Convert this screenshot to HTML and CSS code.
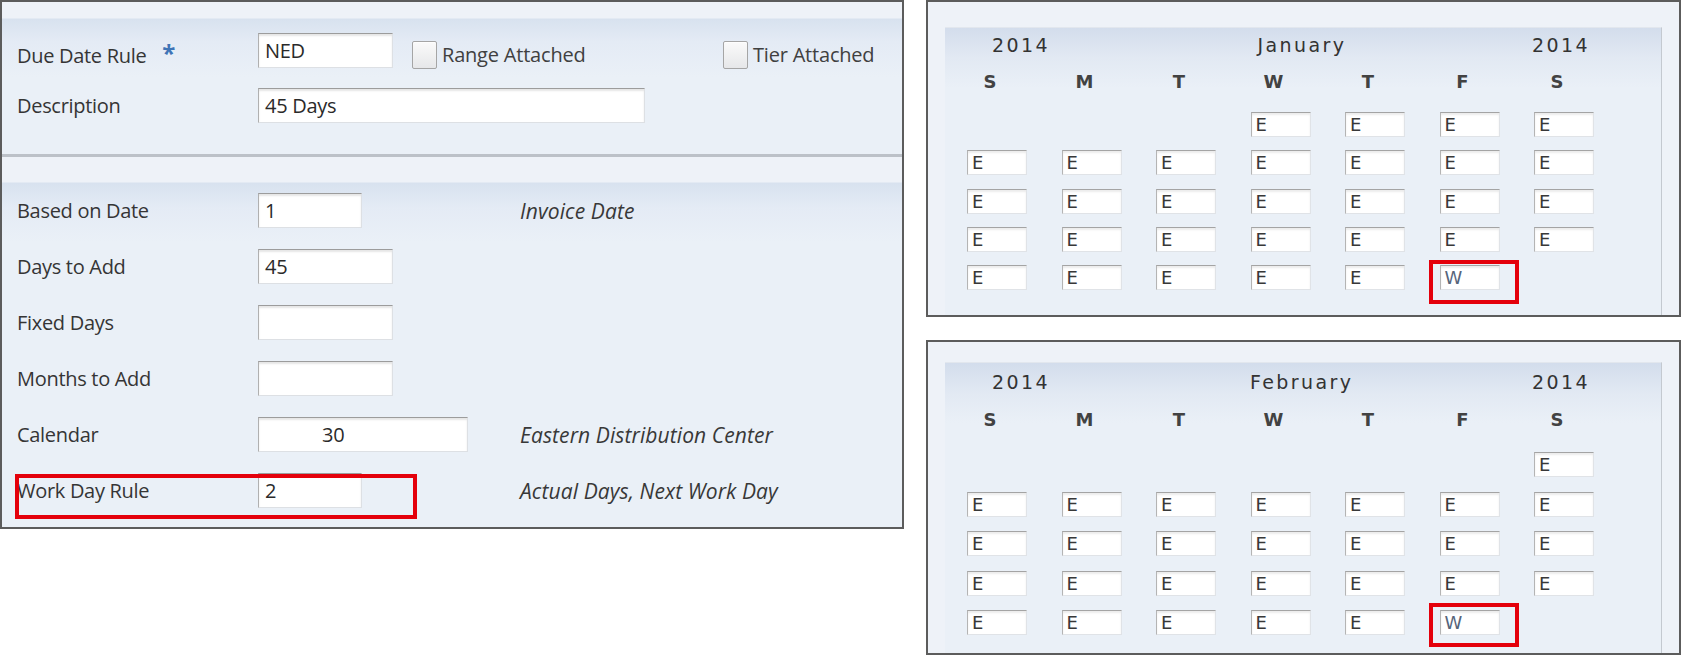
FILE: index.html
```html
<!DOCTYPE html>
<html>
<head>
<meta charset="utf-8">
<link rel="stylesheet" href="styles.css">
</head>
<body>
<div class="page">
  <section class="form-panel">
    <div class="form-sec sec-head">
      <div class="row row-top">
        <span class="lbl">Due Date Rule <span class="req">*</span></span>
        <div class="field w135">NED</div>
        <div class="check range"><span class="cb"></span>Range Attached</div>
        <div class="check"><span class="cb"></span>Tier Attached</div>
      </div>
      <div class="row">
        <span class="lbl">Description</span>
        <div class="field w387">45 Days</div>
      </div>
    </div>
    <div class="form-sec sec-body">
      <div class="row grid-row">
        <span class="lbl">Based on Date</span>
        <div><div class="field w104">1</div></div>
        <span class="desc">Invoice Date</span>
      </div>
      <div class="row grid-row">
        <span class="lbl">Days to Add</span>
        <div><div class="field w135">45</div></div>
        <span class="desc"></span>
      </div>
      <div class="row grid-row">
        <span class="lbl">Fixed Days</span>
        <div><div class="field w135"></div></div>
        <span class="desc"></span>
      </div>
      <div class="row grid-row">
        <span class="lbl">Months to Add</span>
        <div><div class="field w135"></div></div>
        <span class="desc"></span>
      </div>
      <div class="row grid-row">
        <span class="lbl">Calendar</span>
        <div><div class="field w210 indent">30</div></div>
        <span class="desc">Eastern Distribution Center</span>
      </div>
      <div class="row grid-row marked">
        <span class="lbl">Work Day Rule</span>
        <div><div class="field w104">2</div></div>
        <span class="desc">Actual Days, Next Work Day</span>
        <span class="red-box form-mark"></span>
      </div>
    </div>
  </section>

  <div class="cal-col">
    <section class="cal-panel jan">
      <div class="cal-body">
        <div class="cal-head"><span class="yr-l">2014</span><span class="mon">January</span><span class="yr-r">2014</span></div>
        <div class="days"><span>S</span><span>M</span><span>T</span><span>W</span><span>T</span><span>F</span><span>S</span></div>
        <div class="cells">
          <span class="cell c4">E</span><span class="cell">E</span><span class="cell">E</span><span class="cell">E</span>
          <span class="cell">E</span><span class="cell">E</span><span class="cell">E</span><span class="cell">E</span><span class="cell">E</span><span class="cell">E</span><span class="cell">E</span>
          <span class="cell">E</span><span class="cell">E</span><span class="cell">E</span><span class="cell">E</span><span class="cell">E</span><span class="cell">E</span><span class="cell">E</span>
          <span class="cell">E</span><span class="cell">E</span><span class="cell">E</span><span class="cell">E</span><span class="cell">E</span><span class="cell">E</span><span class="cell">E</span>
          <span class="cell">E</span><span class="cell">E</span><span class="cell">E</span><span class="cell">E</span><span class="cell">E</span><span class="cell work">W<span class="red-box cal-mark"></span></span>
        </div>
      </div>
    </section>
    <section class="cal-panel feb">
      <div class="cal-body">
        <div class="cal-head"><span class="yr-l">2014</span><span class="mon">February</span><span class="yr-r">2014</span></div>
        <div class="days"><span>S</span><span>M</span><span>T</span><span>W</span><span>T</span><span>F</span><span>S</span></div>
        <div class="cells">
          <span class="cell c7">E</span>
          <span class="cell">E</span><span class="cell">E</span><span class="cell">E</span><span class="cell">E</span><span class="cell">E</span><span class="cell">E</span><span class="cell">E</span>
          <span class="cell">E</span><span class="cell">E</span><span class="cell">E</span><span class="cell">E</span><span class="cell">E</span><span class="cell">E</span><span class="cell">E</span>
          <span class="cell">E</span><span class="cell">E</span><span class="cell">E</span><span class="cell">E</span><span class="cell">E</span><span class="cell">E</span><span class="cell">E</span>
          <span class="cell">E</span><span class="cell">E</span><span class="cell">E</span><span class="cell">E</span><span class="cell">E</span><span class="cell work">W<span class="red-box cal-mark"></span></span>
        </div>
      </div>
    </section>
  </div>
</div>
</body>
</html>
```

FILE: styles.css
```css
* { box-sizing: border-box; }
html, body { margin: 0; padding: 0; background: #fff; }
body {
  width: 1681px;
  height: 656px;
  overflow: hidden;
  font-family: "Open Sans", "Liberation Sans", sans-serif;
  color: #333;
}
.page { display: flex; align-items: flex-start; gap: 22px; }

/* ---------- form panel ---------- */
.form-panel {
  width: 904px;
  height: 529px;
  border: 2px solid #5c5c5c;
  display: flex;
  flex-direction: column;
  background: #eaf0f7;
}
.form-sec { padding-left: 15px; display: flex; flex-direction: column; }
.sec-head {
  height: 155px;
  padding-top: 31px;
  gap: 20px;
  border-bottom: 3px solid #bcc1c8;
  background: linear-gradient(#eef2f8 0, #eef2f8 16px, #d8e2ef 17px, #e4ebf5 40px, #eaf0f7 75px);
}
.sec-body {
  flex: 1;
  padding-top: 36px;
  gap: 21px;
  background: linear-gradient(#eef2f8 0, #eef2f8 25px, #d8e2ef 26px, #e4ebf5 50px, #eaf0f7 85px);
}
.row { display: flex; align-items: center; height: 35px; position: relative; }
.grid-row { display: grid; grid-template-columns: 241px 262px 1fr; }
.lbl {
  width: 241px;
  flex: none;
  font-size: 20px;
  letter-spacing: -0.3px;
  color: #353535;
}
.row-top .lbl { margin-top: 5px; }
.row-top .check { margin-top: 8px; }
.req { color: #3f74b6; font-size: 24px; font-weight: bold; margin-left: 11px; position: relative; top: -1px; }
.field {
  height: 35px;
  background: #fff;
  border: 1px solid;
  border-color: #9c9c9c #dde0e4 #dde0e4 #b0b0b0;
  box-shadow: inset 0 2px 2px rgba(0,0,0,0.10);
  padding-left: 6px;
  font-size: 20px;
  line-height: 34px;
  letter-spacing: -0.3px;
  color: #2a2a2a;
}
.w104 { width: 104px; }
.w135 { width: 135px; }
.w210 { width: 210px; }
.w387 { width: 387px; }
.indent { padding-left: 63px; }
.desc { font-style: italic; font-size: 21px; letter-spacing: 0.1px; color: #383838; }
.check { display: flex; align-items: center; gap: 5px; font-size: 20px; letter-spacing: -0.2px; color: #404040; }
.range { margin-left: 19px; width: 311px; }
.cb {
  width: 25px;
  height: 28px;
  border: 1px solid #a5a5a5;
  border-radius: 2px;
  background: linear-gradient(#fafafa, #e6e7e9);
  box-shadow: inset 0 1px 1px rgba(255,255,255,0.8);
}
.red-box { position: absolute; border: 4px solid #e4000b; pointer-events: none; }
.form-mark { left: -2px; top: 1px; width: 402px; height: 45px; }

/* ---------- calendars ---------- */
.cal-col { display: flex; flex-direction: column; gap: 23px; }
.cal-panel {
  width: 755px;
  height: 317px;
  border: 2px solid #5c5c5c;
  background: #eef2f8;
  padding: 25px 17px 0 17px;
}
.cal-panel.feb { height: 315px; padding-top: 20px; }
.cal-body {
  height: 100%;
  border-right: 1px solid #c4c9d0;
  border-top: 1px solid #e2e7ee;
  background: linear-gradient(#d3ddec 0, #e2e9f3 30px, #eaf0f7 60px);
  padding-left: 22px;
  font-family: "DejaVu Sans", Verdana, sans-serif;
  color: #333;
}
.cal-head {
  display: grid;
  grid-template-columns: 1.09fr auto 1fr;
  width: 627px;
  padding: 7px 4px 0 25px;
  font-size: 19px;
  line-height: 20px;
  letter-spacing: 2.4px;
}
.feb .cal-head { padding-top: 9px; }
.yr-l { justify-self: start; }
.yr-r { justify-self: end; }
.days {
  display: grid;
  grid-template-columns: repeat(7, 60px);
  column-gap: 34.5px;
  margin-top: 16.5px;
  font-size: 18px;
  font-weight: bold;
  line-height: 20px;
  color: #424242;
}
.feb .days { margin-top: 17.5px; }
.days span { width: 46px; text-align: center; }
.cells {
  display: grid;
  grid-template-columns: repeat(7, 60px);
  grid-auto-rows: 25px;
  column-gap: 34.5px;
  row-gap: 13.25px;
  margin-top: 20.5px;
}
.feb .cells { row-gap: 14.5px; margin-top: 22.5px; }
.cell {
  position: relative;
  background: #fff;
  border: 1px solid;
  border-color: #a4a4a4 #e0e3e7 #e0e3e7 #b4b4b4;
  box-shadow: inset 0 2px 2px rgba(0,0,0,0.08);
  font-size: 18px;
  line-height: 23px;
  padding-left: 4px;
  color: #383838;
}
.c4 { grid-column-start: 4; }
.c7 { grid-column-start: 7; }
.work { color: #56647a; }
.cal-mark { left: -12px; top: -6px; width: 90px; height: 44px; }
.feb .cal-mark { top: -8px; height: 44px; }
```
